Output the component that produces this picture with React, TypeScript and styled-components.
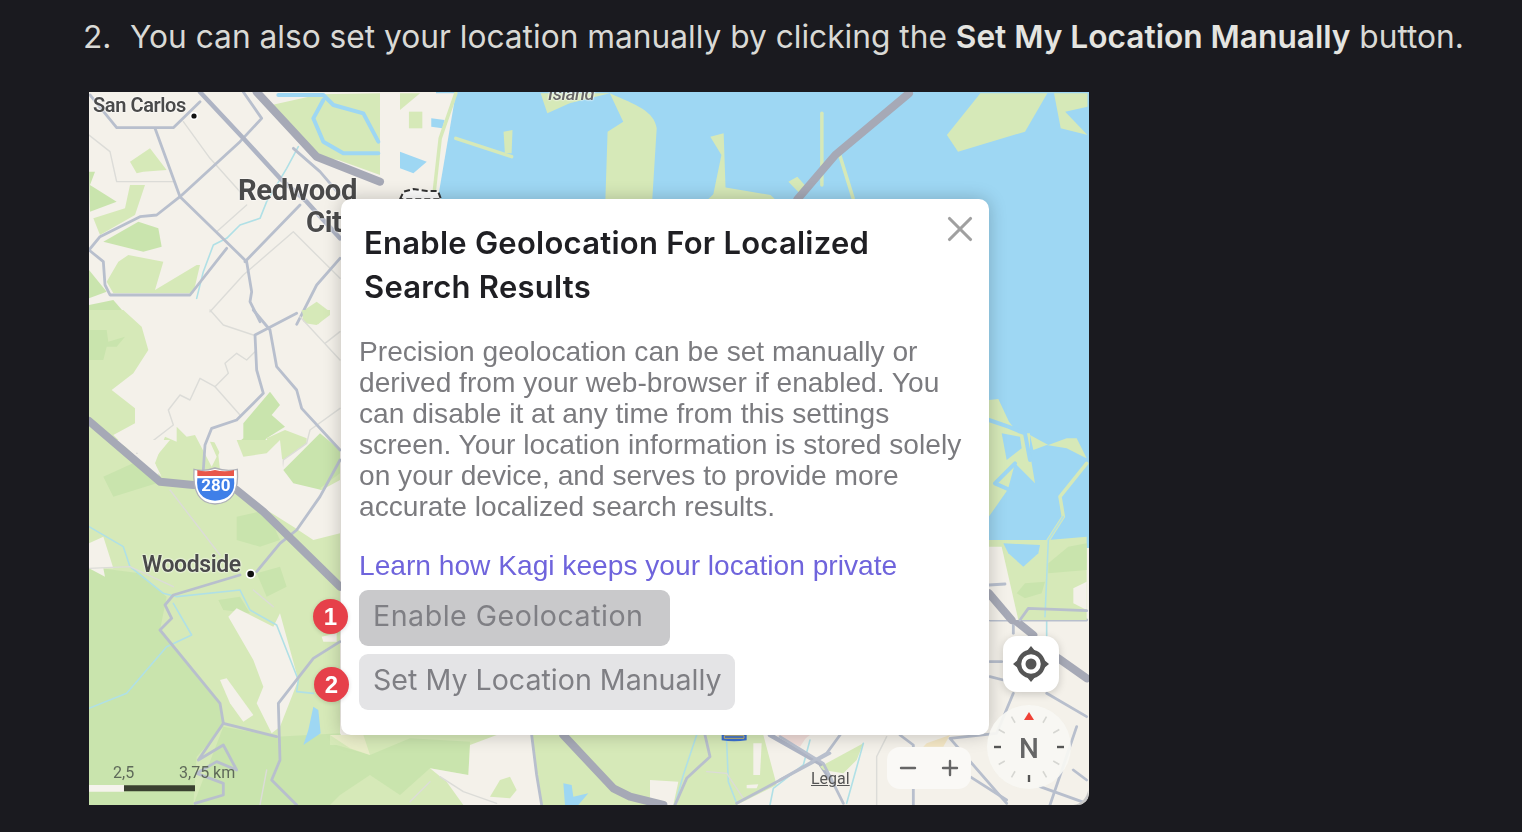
import React from "react";
import styled, { createGlobalStyle } from "styled-components";
import { Minus, Plus, X } from "lucide-react";

const Global = createGlobalStyle`
  html, body { margin: 0; padding: 0; background: #1a1a1f; overflow: hidden; }
`;

const Page = styled.div`
  width: 1522px;
  height: 832px;
  box-sizing: border-box;
  padding: 13px 0 0 83px;
  background: #1a1a1f;
  font-family: Inter, "Liberation Sans", sans-serif;
`;
const Item = styled.div`
  display: flex;
  font-size: 31.68px;
  line-height: 48px;
  color: #d9d9d5;
  white-space: nowrap;
`;
const Marker = styled.span`
  width: 47px;
  flex: none;
`;
const Strong = styled.strong`
  font-weight: 600;
  color: #e4e4e0;
`;
const MapFrame = styled.div`
  position: relative;
  width: 1000px;
  height: 713px;
  margin: 31px 0 0 6px;
  overflow: hidden;
  background: #f4f1ea;
  border-bottom-right-radius: 12px;
`;
const MapArt = styled.svg`
  display: block;
  width: 1000px;
  height: 713px;
  filter: blur(0.75px);
`;
const Land = styled.path`fill: #f4f1ea;`;
const Pale = styled.path`fill: #d6e9b8;`;
const Green = styled.path`fill: #c9e4ad;`;
const Water = styled.path`fill: #9ed7f3;`;
const Line = styled.path`fill: none; stroke-linejoin: round; stroke-linecap: round; vector-effect: non-scaling-stroke;`;
const Highway = styled(Line)`stroke: #a6a9b6; stroke-width: 8px;`;
const Arterial = styled(Line)`stroke: #aeb4c4; stroke-width: 4.5px;`;
const Road = styled(Line)`stroke: #b8bfcd; stroke-width: 2.8px;`;
const Minor = styled(Line)`stroke: #dcdcd8; stroke-width: 1.4px;`;
const Stream = styled(Line)`stroke: #b0e0e6; stroke-width: 1.6px;`;
const PaleStroke = styled(Line)`stroke: #d6e9b8; stroke-width: 3.5px;`;
const WaterStroke = styled(Line)`stroke: #9ed7f3; stroke-width: 4px;`;

const MapLabel = styled.span<{ $x: number; $y: number; $size: number; $weight?: number }>`
  position: absolute;
  left: ${(p) => p.$x}px;
  top: ${(p) => p.$y}px;
  font-family: Roboto, "Liberation Sans", sans-serif;
  font-size: ${(p) => p.$size}px;
  font-weight: ${(p) => p.$weight ?? 500};
  line-height: 1;
  letter-spacing: -0.4px;
  color: #4a4a4a;
  white-space: nowrap;
  text-shadow: 0 0 2px #fff, 0 0 2px #fff;
  filter: blur(0.5px);
`;
const ItalicLabel = styled(MapLabel)`
  font-style: italic;
  color: #666;
`;
const ShieldNumber = styled.span`
  position: absolute;
  left: 105px;
  top: 384px;
  width: 44px;
  text-align: center;
  font: 700 17px/18px Roboto, "Liberation Sans", sans-serif;
  color: #fff;
  filter: blur(0.4px);
`;
const ScaleText = styled.span<{ $x: number }>`
  position: absolute;
  left: ${(p) => p.$x}px;
  top: 672px;
  font: 400 16px/18px Roboto, "Liberation Sans", sans-serif;
  color: #5f6a5a;
  white-space: nowrap;
  filter: blur(0.5px);
`;
const Legal = styled.span`
  position: absolute;
  left: 722px;
  top: 677px;
  font: 400 16px/20px Roboto, "Liberation Sans", sans-serif;
  color: #555;
  text-decoration: underline;
  filter: blur(0.5px);
`;

const Modal = styled.div`
  position: absolute;
  left: 252px;
  top: 107px;
  width: 648px;
  height: 536px;
  box-sizing: border-box;
  padding: 22px 20px 0 18px;
  background: #fff;
  border-radius: 10px;
  box-shadow: 0 0 18px rgba(0, 0, 0, 0.22);
`;
const ModalInner = styled.div`
  filter: blur(0.5px);
`;
const Close = styled.span`
  position: absolute;
  right: 8px;
  top: 9px;
  display: flex;
  color: #a0a0a0;
  filter: blur(0.4px);
`;
const Title = styled.h2`
  margin: 0;
  padding-left: 5px;
  font: 600 31px/44px Inter, "Liberation Sans", sans-serif;
  letter-spacing: 0.25px;
  color: #1f1f23;
  white-space: nowrap;
`;
const Body = styled.p`
  margin: 27px 0 0;
  font: 400 28.15px/31px "Liberation Sans", sans-serif;
  color: #7b7b7f;
  white-space: nowrap;
`;
const LinkText = styled.a`
  display: block;
  margin-top: 28px;
  font: 400 28.15px/31px "Liberation Sans", sans-serif;
  color: #6f64dc;
  white-space: nowrap;
`;
const Actions = styled.div`
  display: flex;
  flex-direction: column;
  align-items: flex-start;
  gap: 8px;
  margin-top: 9px;
`;
const Action = styled.div<{ $tone: "dark" | "light"; $width: number; $tracking: number }>`
  width: ${(p) => p.$width}px;
  height: 56px;
  box-sizing: border-box;
  padding: 0 14px 3px;
  display: flex;
  align-items: center;
  border-radius: 9px;
  background: ${(p) => (p.$tone === "dark" ? "#c9c9cb" : "#e4e4e6")};
  font: 400 28.6px/1 Inter, "Liberation Sans", sans-serif;
  letter-spacing: ${(p) => p.$tracking}px;
  color: #7f7f84;
  white-space: nowrap;
`;
const Badge = styled.span<{ $y: number; $x: number }>`
  position: absolute;
  left: ${(p) => p.$x}px;
  top: ${(p) => p.$y}px;
  width: 35px;
  height: 35px;
  border-radius: 50%;
  background: #e6404a;
  color: #fff;
  font: 700 24px/35px "Liberation Sans", sans-serif;
  text-align: center;
  box-shadow: 0 1px 4px rgba(0, 0, 0, 0.15);
  filter: blur(0.4px);
`;
const LocateButton = styled.div`
  position: absolute;
  left: 914px;
  top: 544px;
  width: 56px;
  height: 56px;
  display: flex;
  align-items: center;
  justify-content: center;
  background: #fff;
  border-radius: 14px;
  box-shadow: 0 2px 8px rgba(0, 0, 0, 0.18);
`;
const LocateIcon = styled.svg`
  filter: blur(0.5px);
`;
const ZoomPill = styled.div`
  position: absolute;
  left: 798px;
  top: 655px;
  width: 84px;
  height: 42px;
  box-sizing: border-box;
  padding: 0 9px;
  display: flex;
  align-items: center;
  justify-content: space-between;
  background: #faf9f6;
  border-radius: 13px;
  color: #666;
  filter: blur(0.5px);
`;
const Compass = styled.div`
  position: absolute;
  left: 898px;
  top: 613px;
  width: 84px;
  height: 84px;
  border-radius: 50%;
  background: rgba(248, 247, 243, 0.93);
  display: flex;
  align-items: center;
  justify-content: center;
  filter: blur(0.5px);
`;
const CompassTicks = styled.svg`
  position: absolute;
  inset: 0;
`;
const CompassN = styled.span`
  position: relative;
  top: 2px;
  font: 500 28px/1 Roboto, "Liberation Sans", sans-serif;
  color: #666;
`;

const Ticks = () => (
  <CompassTicks width="84" height="84" viewBox="-42 -42 84 84">
    {Array.from({ length: 12 }, (_, i) => i * 30).map((a) =>
      a === 0 ? null : (
        <rect
          key={a}
          x={a % 90 === 0 ? -1.2 : -0.8}
          y={-35}
          width={a % 90 === 0 ? 2.4 : 1.6}
          height={7}
          fill={a % 90 === 0 ? "#555" : "#d6d6d2"}
          transform={`rotate(${a})`}
        />
      )
    )}
    <path d="M0 -35 L5 -27 L-5 -27Z" fill="#ef4136" />
  </CompassTicks>
);

const App = () => (
  <>
    <Global />
    <Page>
      <Item>
        <Marker>2.</Marker>
        <span>
          You can also set your location manually by clicking the <Strong>Set My Location Manually</Strong> button.
        </span>
      </Item>
      <MapFrame>
        <MapArt viewBox="89 92 1000 713">
          <Water d="M436 92H1089V548H989V210H436Z" />
          <g transform="translate(80 85) scale(.33333)">
            <Pale d="M575 60L720 28L900 25L900 270L775 225L710 215Z" />
            <WaterStroke d="M595 30L730 30L760 60L850 85L895 170" />
            <WaterStroke d="M730 45L700 100L730 170L790 205L895 205" />
            <Green d="M27 260L45 260L30 300L110 350L30 380Z" />
            <Pale d="M150 230L210 190L260 255L190 260L170 265Z" />
            <Pale d="M40 400L135 370L150 300L195 300L165 390L60 450Z" />
            <Green d="M70 470L175 410L235 430L245 485L190 500Z" />
            <Pale d="M80 590L115 530L145 510L250 530L225 615L350 540L360 540L340 625L100 625Z" />
            <Green d="M27 555L80 620L27 640Z" />
            <Green d="M27 660L100 645L165 720L27 720Z" />
            <Pale d="M665 680L710 650L750 680L715 718L670 710Z" />
            <Minor d="M310 110L390 220L480 320" />
            <Minor d="M27 150L90 200L110 290L280 290" />
            <Minor d="M410 440L500 360" />
            <Minor d="M390 680L490 570L640 440L780 580" />
            <Stream d="M350 640L370 560L400 480L440 460L480 420L540 400L560 350L620 250L655 185" />
            <Road d="M490 21L545 100L480 170L300 335L230 390L180 395L60 455L27 495" />
            <Road d="M225 130L300 335L500 530L515 620L510 650L540 710" />
            <Road d="M30 30L110 128L280 128L360 50" />
            <Road d="M495 530L660 360" />
            <Road d="M27 495L70 530L75 600L90 630L330 630L440 490" />
            <Road d="M650 718L710 600L780 520" />
            <Road d="M640 190L720 260L780 330" />
            <Arterial d="M360 21L490 160L600 280L680 350L780 460" />
            <Highway d="M530 21L710 215L900 290" />
          </g>
          <g transform="translate(80 310) scale(.33333)">
            <Pale d="M27 0L130 0L185 50L205 120L160 190L95 240L165 295L165 340L100 375L240 510L27 335Z" />
            <Green d="M27 60L80 60L85 95L135 80L110 110L80 110L70 150L27 150Z" />
            <Pale d="M225 460L255 380L290 395L290 350L320 380L345 375L395 470L410 440L390 395L430 400L415 435L420 480L480 540L240 510Z" />
            <Green d="M490 340L570 245L600 285L575 315L615 350L560 385L510 445L480 445L465 405L490 385Z" />
            <Pale d="M560 385L615 360L680 385L680 400L610 450L570 420Z" />
            <Green d="M610 480L720 370L780 420L780 540L680 540Z" />
            <Pale d="M665 0L750 0L750 15L710 45L675 40Z" />
            <Minor d="M390 0L430 45L520 75" />
            <Minor d="M525 125L500 150L470 130L435 160L445 190L405 230L360 205L330 270L300 255L265 300L280 345L170 430" />
            <Minor d="M405 230L480 315" />
            <Minor d="M660 20L780 150" />
            <Minor d="M735 100L780 65" />
            <Minor d="M780 295L690 360L680 400L610 450L600 530" />
            <Road d="M520 0L570 60L590 170L650 240L665 295L780 420" />
            <Road d="M650 10L525 75L530 180L550 250L470 330L395 355L375 405L370 480" />
          </g>
          <Pale d="M89 420L160 482L240 490L340 587V805H89Z" />
          <g transform="translate(80 440) scale(.33333)">
            <Pale d="M340 140L480 150L780 440L780 100L700 160L610 100Z" />
            <Land d="M100 0L270 0L220 60L245 110L175 40Z" />
            <Land d="M400 0L600 0L610 90L725 150L780 120L780 280L700 300L640 260L560 210L470 140L430 60Z" />
            <Pale d="M470 0L600 0L560 40L490 50Z" />
            <Green d="M610 90L660 70L725 150L640 130Z" />
            <Green d="M27 380L180 400L260 470L240 570L420 790L430 860L350 950L340 1095L27 1095Z" />
            <Green d="M70 110L180 60L230 130L100 170Z" />
            <Green d="M470 230L560 210L600 300L540 320L470 300Z" />
            <Green d="M415 480L480 470L510 520L430 510Z" />
            <Green d="M430 860L590 890L780 880L900 1095L340 1095Z" />
            <Green d="M530 400L600 380L620 440L560 470Z" />
            <Land d="M27 310L70 290L100 385L70 385L75 410L27 385Z" />
            <Land d="M445 530L470 505L580 560L600 520L655 720L600 860L575 880L530 790L550 740L520 660Z" />
            <Land d="M420 720L440 715L520 825L490 845L450 790Z" />
            <Land d="M725 590L770 580L770 605L730 605Z" />
            <Water d="M700 800L715 810L722 880L670 915L685 870Z" />
            <Stream d="M27 260L130 320L150 380L250 460L290 470L480 450L510 510L590 555L655 720L650 755L700 760" />
            <Stream d="M280 490L335 585L260 620L140 760L27 805" />
            <Minor d="M270 150L420 345" />
            <Minor d="M27 385L150 380L280 440" />
            <Minor d="M520 450L580 500" />
            <Minor d="M540 1095L560 990" />
            <Road d="M530 395L600 310L650 270L720 170L780 60" />
            <Road d="M480 405L280 465L255 495L275 535L240 570L420 790L430 850L590 890" />
            <Road d="M430 850L355 960L430 915L470 990L410 965L350 1000L430 1030L430 1065L345 1090" />
            <Road d="M780 605L700 655L595 790L600 960L575 1020L650 1095" />
            <Highway d="M27 -57L240 125L340 135" />
            <Highway d="M470 150L550 215L780 440" />
            <path d="M27 1035H132V1055H27Z" fill="#f5f3ec" />
            <path d="M132 1036H345V1054H132Z" fill="#3a4030" />
            <path d="M342 88Q372 96 405 84Q440 96 472 88Q480 190 405 192Q335 190 342 88Z" fill="#fff" stroke="#aeb0b8" strokeWidth="4" />
            <path d="M352 90Q375 98 405 90Q435 98 462 90V108H352Z" fill="#e8574a" />
            <path d="M352 115H462Q470 178 405 182Q345 178 352 115Z" fill="#3f7fe8" />
            <circle cx="512" cy="402" r="15" fill="#fff" />
            <circle cx="512" cy="402" r="10" fill="#111" />
          </g>
          <g transform="translate(330 725) scale(.33333)">
            <Pale d="M0 30H1300L1340 180L1220 240H0Z" />
            <Green d="M20 60L120 90L240 40L420 50L415 150L300 130L210 210L120 150L30 210L0 240H0V60Z" />
            <Land d="M420 60L500 30L605 30L635 240H400L350 170L300 130L415 150Z" />
            <path d="M0 30L60 70L120 90L100 30Z" fill="#e9edc9" />
            <Pale d="M480 215L510 165L540 155L560 195L540 220Z" />
            <Land d="M960 165L1045 170L1030 240H960Z" />
            <Land d="M1270 55L1295 55L1290 150L1270 150Z" />
            <Land d="M1250 180L1285 178L1280 190L1250 190Z" />
            <Water d="M700 175L725 180L730 215L775 205L745 240H705Z" />
            <Stream d="M1100 30L1060 150L1035 240" />
            <Stream d="M1190 50L1195 170L1220 235" />
            <Stream d="M1440 45L1420 120L1330 190L1320 240" />
            <Minor d="M300 170L240 230" />
            <Minor d="M330 155L400 200L500 235" />
            <Minor d="M1130 140L1190 145L1240 220" />
            <Road d="M605 30L620 150L635 240" />
            <Road d="M1125 30L1140 95L1070 160L1035 240" />
            <Road d="M1220 235L1500 85" />
            <Arterial d="M1320 30L1470 115L1500 160" />
            <Highway d="M700 30L850 190L900 215L1000 240" />
            <path d="M1175 25H1250V46Q1212 52 1175 46Z" fill="#3a6fd0" />
            <path d="M1183 32H1242V40H1183Z" fill="none" stroke="#c9b96b" strokeWidth="3" />
            <path d="M1340 30H1440L1400 60Z" fill="#f0dcd8" />
          </g>
          <g transform="translate(780 600) scale(.33333)">
            <Pale d="M120 500L250 430L230 480L190 520L130 510Z" />
            <Pale d="M700 0L890 0L880 25L730 30L700 55Z" />
            <path d="M440 430L510 405L490 440L430 440Z" fill="#f3e6c4" />
            <path d="M0 410L80 410L60 440Z" fill="#f0dcd8" />
            <Minor d="M290 615V470L320 410" />
            <Stream d="M250 430L200 610" />
            <Stream d="M800 0V110" />
            <Road d="M0 410L130 490L190 610" />
            <Road d="M180 405L140 460L0 540" />
            <Road d="M360 405L400 435L400 615" />
            <Road d="M630 60H920" />
            <Road d="M630 185H665" />
            <Road d="M630 230L670 240" />
            <Road d="M700 30V100" />
            <Road d="M700 280L650 400L510 415L680 610" />
            <Road d="M800 280L920 350" />
            <Road d="M890 380L810 615" />
            <Road d="M780 560L920 610" />
            <Road d="M880 510L920 540" />
            <Road d="M570 530L680 600" />
            <Highway d="M630 0L760 105" />
            <Highway d="M835 175L920 235" />
            <path d="M880 615Q915 610 925 570V615Z" fill="#c7c7c7" />
          </g>
          <g transform="translate(985 200) scale(.33333)">
            <Pale d="M12 600L40 597L72 665L100 700L135 700L135 760L150 850L90 790L60 900L12 960Z" />
            <WaterStroke d="M12 660L70 680L120 700L135 780" />
            <WaterStroke d="M90 790L30 850L75 870L12 960" />
            <Water d="M50 700L105 710L110 745L65 780Z" />
            <Pale d="M135 705L190 735L245 715L275 715L305 775L295 770L245 745L185 735L145 750Z" />
            <PaleStroke d="M305 790L225 890L235 950L190 1020" />
            <Pale d="M12 1020L190 1020L305 1010V1260H12Z" />
            <Water d="M55 1030L165 1035L160 1060L115 1100L70 1060Z" />
            <Land d="M12 1040L50 1040L75 1150L100 1260H12Z" />
            <Green d="M190 1090L250 1040L305 1030V1110L190 1120Z" />
            <Green d="M95 1180L120 1150L180 1145L170 1180L120 1195Z" />
            <Land d="M265 1165L305 1145V1230L265 1210Z" />
            <Stream d="M235 950L190 1020L180 1250" />
            <Road d="M105 1260L130 1225L305 1232" />
            <Road d="M12 1155L60 1152" />
            <Highway d="M12 1180L80 1260" />
          </g>
          <g transform="translate(400 85) scale(.44643 .33333)">
            <Land d="M0 25H125L85 340H0Z" />
            <Pale d="M0 25H45L0 75Z" />
            <Pale d="M20 80H50V130H20Z" />
            <Water d="M70 100L100 105L95 130L70 125Z" />
            <Water d="M0 200L60 230L30 265L0 250Z" />
            <PaleStroke d="M125 25L90 160L75 340" />
            <Pale d="M315 25H470L380 55L330 85Z" />
            <Pale d="M470 25C530 60 570 80 575 130L565 345H460L465 140L500 110Z" />
            <Pale d="M1225 150L1300 25H1450L1400 140L1250 200Z" />
            <Pale d="M1465 25H1540V65L1490 80L1540 150L1480 130Z" />
            <Pale d="M695 155L725 145L730 340L700 340L720 210Z" />
            <Pale d="M870 290L890 275L910 305L895 325Z" />
            <Pale d="M720 305L830 330L840 343H690Z" />
            <Pale d="M232 140L252 135L250 205L235 205Z" />
            <PaleStroke d="M125 160L250 215" />
            <PaleStroke d="M945 85V300" />
            <PaleStroke d="M985 210L1015 340" />
            <path d="M0 343L8 320L30 312L60 318L85 318L92 343Z" fill="#fff" stroke="#333" strokeWidth="2" strokeDasharray="6 3" vectorEffect="non-scaling-stroke" />
            <Highway d="M1140 25L975 210L890 343" />
          </g>
          <circle cx="194" cy="116" r="4" fill="#fff" />
          <circle cx="194" cy="116" r="2.6" fill="#111" />
        </MapArt>

        <ItalicLabel $x={459} $y={-7} $size={18.5}>Island</ItalicLabel>
        <MapLabel $x={4} $y={3} $size={20} $weight={600}>San Carlos</MapLabel>
        <MapLabel $x={149} $y={84} $size={29.2} $weight={700}>Redwood</MapLabel>
        <MapLabel $x={217} $y={116} $size={29.2} $weight={700}>City</MapLabel>
        <MapLabel $x={53} $y={461} $size={23} $weight={600}>Woodside</MapLabel>
        <ShieldNumber>280</ShieldNumber>
        <ScaleText $x={24}>2,5</ScaleText>
        <ScaleText $x={90}>3,75 km</ScaleText>
        <Legal>Legal</Legal>

        <Modal>
          <Close><X size={42} strokeWidth={1.8} /></Close>
          <ModalInner>
            <Title>
              Enable Geolocation For Localized
              <br />
              Search Results
            </Title>
            <Body>
              Precision geolocation can be set manually or
              <br />
              derived from your web-browser if enabled. You
              <br />
              can disable it at any time from this settings
              <br />
              screen. Your location information is stored solely
              <br />
              on your device, and serves to provide more
              <br />
              accurate localized search results.
            </Body>
            <LinkText>Learn how Kagi keeps your location private</LinkText>
            <Actions>
              <Action $tone="dark" $width={311} $tracking={0.5}>Enable Geolocation</Action>
              <Action $tone="light" $width={376} $tracking={0}>Set My Location Manually</Action>
            </Actions>
          </ModalInner>
          <Badge $x={-28} $y={400}>1</Badge>
          <Badge $x={-27} $y={468}>2</Badge>
        </Modal>

        <LocateButton>
          <LocateIcon width="38" height="38" viewBox="0 0 38 38">
            <circle cx="19" cy="19" r="12" fill="none" stroke="#555" strokeWidth="4.5" />
            <circle cx="19" cy="19" r="5.5" fill="#555" />
            <path d="M19 1L24 7H14ZM19 37L14 31H24ZM1 19L7 14V24ZM37 19L31 24V14Z" fill="#555" />
          </LocateIcon>
        </LocateButton>
        <ZoomPill>
          <Minus size={24} strokeWidth={2.4} />
          <Plus size={24} strokeWidth={2.4} />
        </ZoomPill>
        <Compass>
          <Ticks />
          <CompassN>N</CompassN>
        </Compass>
      </MapFrame>
    </Page>
  </>
);

export default App;
